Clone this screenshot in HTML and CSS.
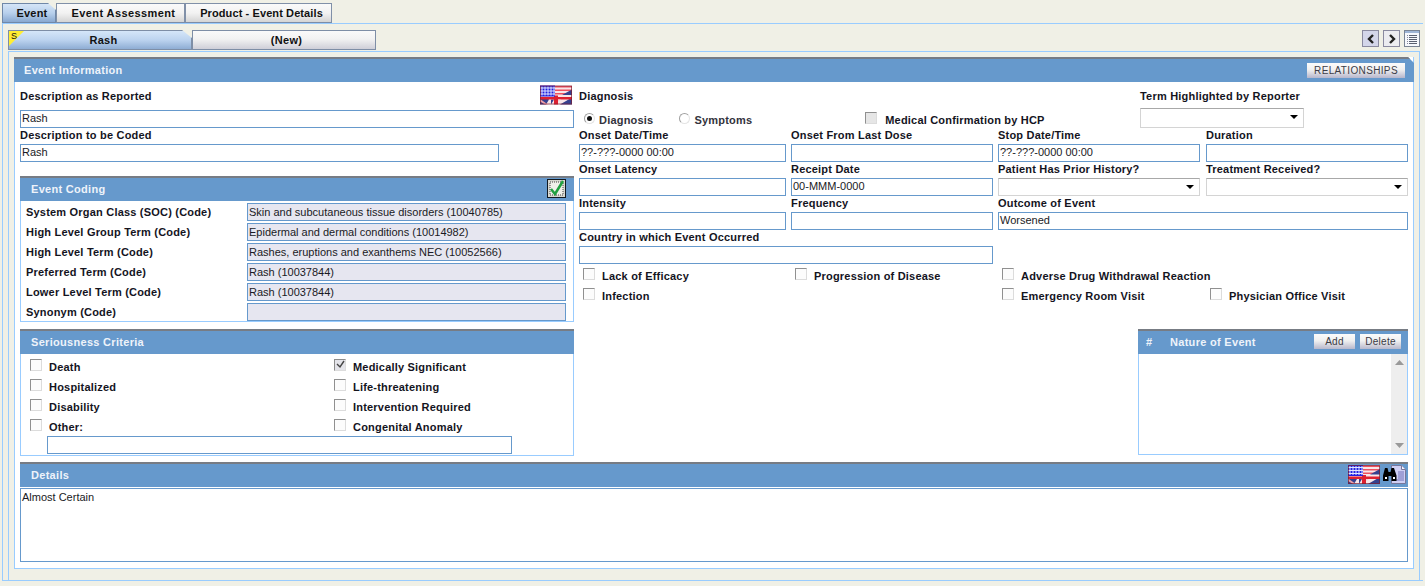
FILE: index.html
```html
<!DOCTYPE html>
<html lang="en">
<head>
<meta charset="utf-8">
<title>Event</title>
<link rel="stylesheet" href="styles.css">
</head>
<body>
<svg class="defs" width="0" height="0" aria-hidden="true">
  <symbol id="flag" viewBox="0 0 32 19">
    <rect width="32" height="19" fill="#f8e6e8"/>
    <path d="M15 .5h17v1.500H15zM15 4h17v1.500H15zM15 7.500h12v1.500H15z" fill="#f05060"/>
    <path d="M0 19V12h6l3 2-3 5zM11 19l3-5h-3zM20 19l12-7v7zM22 9.500 32 4v5.500z" fill="#35408f"/>
    <path d="M0 13.500 8 19H5L0 16z" fill="#f0a0a8"/>
    <path d="M14 10h4v1.500h14v2.500H18v5h-4v-5H0v-2.500h14z" fill="#dd2030"/>
    <path d="M18 14h3l-3 2z" fill="#f6d0d4"/>
    <path d="M0 0h15v11H0z" fill="#2020e0"/>
    <path d="M2 1v9M5 1v9M8 1v9M11 1v9M14 1v9M0 2.500h15M0 5.500h15M0 8.500h15" stroke="#dfe4ff" stroke-width="1"/>
    <rect x=".5" y=".5" width="31" height="18" fill="none" stroke="#7a2030" stroke-opacity=".7"/>
  </symbol>
  <symbol id="check" viewBox="0 0 19 19">
    <rect x=".5" y=".5" width="18" height="18" fill="#d8d8d0" stroke="#101820"/>
    <rect x="3" y="3" width="13" height="13" fill="#f0f0ea" stroke="#444" stroke-dasharray="1 1"/>
    <path d="M4 10l4 5 8-13" fill="none" stroke="#20a040" stroke-width="2.500"/>
  </symbol>
</svg>

<nav class="maintabs">
  <div class="mtab mtab-active mtab-event">Event</div>
  <div class="mtab mtab-assess">Event Assessment</div>
  <div class="mtab mtab-product">Product - Event Details</div>
</nav>

<div class="outer">
  <div class="subbar">
    <div class="stab stab-active">
      <span class="flagS">S</span>
      Rash
    </div>
    <div class="stab">(New)</div>
    <div class="subnav">
      <span class="navbtn"><svg width="12" height="12" viewBox="0 0 12 12"><path d="M8 2 4 6l4 4" fill="none" stroke="#222" stroke-width="2.400"/></svg></span>
      <span class="navbtn navbtn-light"><svg width="12" height="12" viewBox="0 0 12 12"><path d="M4 2l4 4-4 4" fill="none" stroke="#222" stroke-width="2.400"/></svg></span>
      <svg class="listicon" width="16" height="17" viewBox="0 0 16 17"><rect x=".5" y=".5" width="15" height="16" fill="#f6f8fc" stroke="#7a8494"/><rect x="1" y="1" width="14" height="2" fill="#9fb6d6"/><path d="M5 5.500h8M5 7.500h8M5 9.500h8M5 11.500h8M5 13.500h8" stroke="#5a6070"/><path d="M3 5.500h1M3 7.500h1M3 9.500h1M3 11.500h1M3 13.500h1" stroke="#889"/></svg>
    </div>
  </div>

  <div class="wrap">
    <section class="card">
      <header class="cardhead mainhead">
        <span>Event Information</span>
        <button class="relbtn">RELATIONSHIPS</button>
      </header>
      <div class="formarea">
        <div class="leftcol">
          <div class="descrow">
            <label class="lbl">Description as Reported</label>
            <svg class="flagicon" width="32" height="20"><use href="#flag"/></svg>
          </div>
          <div class="field fullfield">Rash</div>
          <label class="lbl">Description to be Coded</label>
          <div class="field codedfield">Rash</div>

          <section class="subpanel coding">
            <header class="subhead">
              <span>Event Coding</span>
              <svg width="19" height="19"><use href="#check"/></svg>
            </header>
            <div class="codegrid">
              <label class="lbl">System Organ Class (SOC) (Code)</label><div class="field ro">Skin and subcutaneous tissue disorders (10040785)</div>
              <label class="lbl">High Level Group Term (Code)</label><div class="field ro">Epidermal and dermal conditions (10014982)</div>
              <label class="lbl">High Level Term (Code)</label><div class="field ro">Rashes, eruptions and exanthems NEC (10052566)</div>
              <label class="lbl">Preferred Term (Code)</label><div class="field ro">Rash (10037844)</div>
              <label class="lbl">Lower Level Term (Code)</label><div class="field ro">Rash (10037844)</div>
              <label class="lbl">Synonym (Code)</label><div class="field ro"></div>
            </div>
          </section>

          <section class="subpanel serious">
            <header class="subhead"><span>Seriousness Criteria</span></header>
            <div class="sergrid">
              <div class="ck"><i class="box"></i><span class="lbl">Death</span></div>
              <div class="ck"><i class="box box-on"><svg width="9" height="9" viewBox="0 0 9 9"><path d="M1 4l3 3 4-6" fill="none" stroke="#444" stroke-width="1.400"/></svg></i><span class="lbl">Medically Significant</span></div>
              <div class="ck"><i class="box"></i><span class="lbl">Hospitalized</span></div>
              <div class="ck"><i class="box"></i><span class="lbl">Life-threatening</span></div>
              <div class="ck"><i class="box"></i><span class="lbl">Disability</span></div>
              <div class="ck"><i class="box"></i><span class="lbl">Intervention Required</span></div>
              <div class="ck"><i class="box"></i><span class="lbl">Other:</span></div>
              <div class="ck"><i class="box"></i><span class="lbl">Congenital Anomaly</span></div>
            </div>
            <div class="field otherfield"></div>
          </section>
        </div>

        <div class="rightcol">
          <div class="toprow">
            <div class="diag">
              <label class="lbl">Diagnosis</label>
              <div class="radios">
                <span class="radio radio-on"></span><span class="lbl lbl-grey">Diagnosis</span>
                <span class="radio radio-sym"></span><span class="lbl lbl-grey">Symptoms</span>
                <i class="box box-grey"></i><span class="lbl">Medical Confirmation by HCP</span>
              </div>
            </div>
            <div class="term">
              <label class="lbl">Term Highlighted by Reporter</label>
              <div class="sel selterm"></div>
            </div>
          </div>

          <div class="fgrid">
            <div class="cell"><label class="lbl">Onset Date/Time</label><div class="field">??-???-0000 00:00</div></div>
            <div class="cell"><label class="lbl">Onset From Last Dose</label><div class="field"></div></div>
            <div class="cell c3"><label class="lbl">Stop Date/Time</label><div class="field">??-???-0000 00:00</div></div>
            <div class="cell"><label class="lbl">Duration</label><div class="field"></div></div>
            <div class="cell"><label class="lbl">Onset Latency</label><div class="field"></div></div>
            <div class="cell"><label class="lbl">Receipt Date</label><div class="field">00-MMM-0000</div></div>
            <div class="cell c3"><label class="lbl">Patient Has Prior History?</label><div class="sel"></div></div>
            <div class="cell"><label class="lbl">Treatment Received?</label><div class="sel"></div></div>
            <div class="cell"><label class="lbl">Intensity</label><div class="field"></div></div>
            <div class="cell"><label class="lbl">Frequency</label><div class="field"></div></div>
            <div class="cell span2"><label class="lbl">Outcome of Event</label><div class="field">Worsened</div></div>
            <div class="cell span2"><label class="lbl">Country in which Event Occurred</label><div class="field"></div></div>
          </div>

          <div class="flags">
            <div class="ck"><i class="box"></i><span class="lbl">Lack of Efficacy</span></div>
            <div class="ck"><i class="box"></i><span class="lbl">Progression of Disease</span></div>
            <div class="ck flagwide"><i class="box"></i><span class="lbl">Adverse Drug Withdrawal Reaction</span></div>
            <div class="ck"><i class="box"></i><span class="lbl">Infection</span></div>
            <div></div>
            <div class="ck"><i class="box"></i><span class="lbl">Emergency Room Visit</span></div>
            <div class="ck"><i class="box"></i><span class="lbl">Physician Office Visit</span></div>
          </div>

          <section class="nature">
            <header class="subhead naturehead">
              <span class="hash">#</span>
              <span class="nature-title">Nature of Event</span>
              <button class="minibtn">Add</button>
              <button class="minibtn">Delete</button>
            </header>
            <div class="naturebody">
              <div class="scroll">
                <svg width="9" height="5" viewBox="0 0 9 5"><path d="M0 5 4.500 0 9 5z" fill="#999"/></svg>
                <svg width="9" height="5" viewBox="0 0 9 5"><path d="M0 0h9L4.500 5z" fill="#999"/></svg>
              </div>
            </div>
          </section>
        </div>
      </div>

      <section class="details">
        <header class="subhead">
          <span>Details</span>
          <div class="detailicons">
            <svg width="32" height="19"><use href="#flag"/></svg>
            <svg class="binoc" width="24" height="19" viewBox="0 0 24 19">
              <path d="M9.500.5h10l4 4v14h-14z" fill="#cfcff4" stroke="#77779a"/>
              <path d="M19.500.5v4h4" fill="#f4f4ff" stroke="#77779a"/>
              <path d="M16 7h6M16 9h6M16 11h6M16 13h6M12 15h10" stroke="#7070b8"/>
              <path d="M3 3h2.500l1 4h2l1-4H12l2.500 7.500V16h-5v-5h-3v5H1v-5.500z" fill="#000"/>
              <path d="M3 12h2v2H3zM11 12h2v2h-2z" fill="#fff"/>
            </svg>
          </div>
        </header>
        <div class="textarea">Almost Certain</div>
      </section>
    </section>
  </div>
</div>
</body>
</html>
```

FILE: styles.css
```css
* { box-sizing: border-box; }
html, body { margin: 0; padding: 0; }
body {
  width: 1425px;
  height: 586px;
  overflow: hidden;
  background: #f0f0e6;
  font-family: "Liberation Sans", Arial, sans-serif;
  font-size: 11px;
  color: #111;
}
.defs { position: absolute; }
.lbl { font-size: 11px; font-weight: bold; color: #14141e; letter-spacing: .2px; line-height: 14px; white-space: nowrap; display: block; }
.lbl-grey { color: #33333c; font-weight: bold; }

/* main tabs */
.maintabs { display: flex; height: 23px; padding: 3px 0 0 2px; }
.mtab {
  height: 20px;
  padding-left: 6px;
  border: 1px solid #8090a8;
  border-bottom-color: #7a8ca8;
  background: linear-gradient(#fafafa, #f2f2f2 50%, #d4d4d4);
  font-size: 11px;
  font-weight: bold;
  letter-spacing: .2px;
  line-height: 18px;
  text-align: center;
}
.mtab-event { width: 54px; }
.mtab-assess { width: 129px; letter-spacing: .4px; }
.mtab-product { width: 147px; letter-spacing: .1px; }
.mtab-active {
  background: linear-gradient(#d5e5f7, #b8d0ec 50%, #88a8d0);
  clip-path: polygon(0 0, 46px 0, 100% 7px, 100% 100%, 0 100%);
  border-color: #7088a8;
}

.outer {
  margin-left: 2px;
  width: 1421px;
  height: 558px;
  border: 1px solid #99ccff;
  border-right: 0;
  padding: 5px 0 0 5px;
}
.subbar { display: flex; height: 22px; align-items: flex-start; padding-top: 1px; }
.stab {
  width: 184px;
  height: 20px;
  padding-left: 5px;
  border: 1px solid #7e8ea6;
  background: linear-gradient(#fafafa, #f2f2f2 45%, #cfcfd8 100%);
  font-size: 11px;
  font-weight: bold;
  letter-spacing: .3px;
  line-height: 18px;
  text-align: center;
}
.stab-active {
  position: relative;
  padding-left: 7px;
  background: linear-gradient(#d5e6f9, #bcd3ef 50%, #8eadd4);
  clip-path: polygon(0 0, 174px 0, 100% 8px, 100% 100%, 0 100%);
}
.flagS {
  position: absolute;
  left: 0;
  top: 0;
  width: 15px;
  height: 15px;
  background: #ffee33;
  clip-path: polygon(0 0, 100% 0, 0 100%);
  font-size: 9px;
  font-weight: normal;
  line-height: 10px;
  text-align: left;
  padding-left: 2px;
  letter-spacing: 0;
}
.subnav { margin-left: auto; margin-right: 3px; display: flex; gap: 4px; align-items: center; height: 17px; width: 58px; }
.navbtn {
  width: 17px;
  height: 17px;
  flex: none;
  border: 1px solid #8a8aa0;
  background: #d4d6ea;
  display: flex;
  align-items: center;
  justify-content: center;
}
.navbtn-light { background: #ececf0; }
.listicon { flex: none; }

/* Main panel */
.wrap {
  width: 1412px;
  height: 530px;
  border: 1px solid #99ccff;
  padding: 5px 0 0 5px;
}
.card {
  width: 1400px;
  height: 512px;
  background: #fff;
  border: 1px solid #99ccff;
  border-top: 0;
}
.cardhead, .subhead {
  display: flex;
  align-items: center;
  justify-content: space-between;
  background: #6699cc;
  border-top: 2px solid #777c84;
  color: #eef3fa;
  font-size: 11px;
  font-weight: bold;
  letter-spacing: .3px;
}
.mainhead {
  height: 25px;
  margin: 0 -1px;
  padding: 0 9px 2px 10px;
  clip-path: polygon(0 0, calc(100% - 6px) 0, 100% 6px, 100% 100%, 0 100%);
}
.relbtn {
  width: 98px;
  height: 15px;
  margin-top: 2px;
  padding: 0;
  border: 0;
  background: linear-gradient(#fbfbfb, #f0f0f0 45%, #b6b6cc);
  font: 10px "Liberation Sans", Arial, sans-serif;
  letter-spacing: .35px;
  color: #3c3c46;
}
.formarea { display: flex; height: 380px; padding-left: 5px; }
.leftcol { width: 554px; padding-top: 7px; flex: none; }
.descrow { display: flex; justify-content: space-between; height: 21px; padding-right: 2px; }
.flagicon { margin-top: -4px; }
.field {
  height: 18px;
  border: 1px solid #6699cc;
  background: #fff;
  padding-left: 1px;
  font-size: 11px;
  line-height: 14px;
  color: #1a1a24;
  white-space: nowrap;
  overflow: hidden;
}
.codedfield { width: 479px; margin-top: 2px; }

.subpanel { border: 1px solid #99ccff; border-top: 0; }
.subhead { height: 25px; margin: 0 -1px; padding: 0 8px 2px 11px; }
.coding { margin-top: 14px; height: 146px; }
.codegrid {
  display: grid;
  grid-template-columns: 221px 319px;
  grid-auto-rows: 20px;
  padding: 1px 0 0 5px;
  align-items: center;
}
.codegrid .field.ro { background: #e6e6f0; line-height: 16px; }
.serious { margin-top: 7px; height: 127px; }
.sergrid {
  display: grid;
  grid-template-columns: 304px 1fr;
  grid-auto-rows: 20px;
  padding: 3px 0 0 9px;
}
.ck { display: flex; align-items: center; gap: 7px; height: 20px; }
.box {
  flex: none;
  width: 12px;
  height: 12px;
  margin-top: -5px;
  border: 1px solid #909090;
  border-right-color: #dcdcdc;
  border-bottom-color: #dcdcdc;
  background: #fcfcfc;
  display: flex;
  align-items: center;
  justify-content: center;
}
.box-on { background: #e4e4ea; border-color: #8c8c8c #dcdcdc #dcdcdc #8c8c8c; }
.otherfield { width: 465px; margin: -1px 0 0 26px; }

.rightcol { flex: 1; padding: 7px 0 0 5px; width: 829px; }
.toprow { display: flex; height: 39px; }
.diag { width: 561px; }
.term { width: 268px; }
.sel.selterm { width: 164px; margin-top: 5px; height: 20px; }
.radios { display: flex; align-items: center; height: 20px; margin-top: 7px; padding-left: 5px; }
.radio {
  width: 11px;
  height: 11px;
  border-radius: 50%;
  border: 1px solid #a0a0a0;
  border-right-color: #e4e4e4;
  border-bottom-color: #e4e4e4;
  background: #fff;
  margin-top: -3px;
  flex: none;
  position: relative;
}
.radio-on::after { content: ""; position: absolute; left: 2px; top: 2px; width: 5px; height: 5px; border-radius: 50%; background: #111; }
.radio + .lbl { margin-left: 4px; }
.radio-sym { margin-left: 26px; }
.box-grey { background: #e6e6e6; margin: -5px 0 0 113px; }
.box-grey + .lbl { margin-left: 8px; }

.fgrid {
  display: grid;
  grid-template-columns: 207px 202px 203px 202px;
  column-gap: 5px;
  width: 829px;
}
.cell { height: 34px; padding-top: 1px; }
.c3 { padding-right: 1px; }
.cell .lbl { height: 15px; line-height: 12px; }
.cell .field, .cell .sel { height: 18px; }
.span2 { grid-column: span 2; }
.sel {
  height: 18px;
  border: 1px solid #d4d4d4;
  border-top-color: #a8a8a8;
  background: #fff;
  position: relative;
}
.sel::after {
  content: "";
  position: absolute;
  right: 5px;
  top: 6px;
  border-left: 4px solid transparent;
  border-right: 4px solid transparent;
  border-top: 4px solid #000;
}
.flags {
  display: grid;
  grid-template-columns: 212px 207px 208px 1fr;
  grid-auto-rows: 20px;
  padding: 2px 0 0 4px;
}
.flagwide { grid-column: span 2; }

.nature { width: 270px; height: 126px; margin: 23px 0 0 559px; border: 1px solid #99ccff; border-top: 0; }
.subhead.naturehead { height: 25px; padding: 0 7px 2px 8px; justify-content: flex-start; }
.hash { width: 24px; }
.nature-title { flex: 1; }
.minibtn {
  width: 41px;
  height: 15px;
  padding: 0;
  margin-left: 5px;
  border: 0;
  background: linear-gradient(#fbfbfb, #f0f0f0 45%, #b8b8cc);
  font: 10px "Liberation Sans", Arial, sans-serif;
  letter-spacing: .3px;
  color: #3a3a44;
}
.naturebody { height: 100px; display: flex; justify-content: flex-end; }
.scroll {
  width: 16px;
  background: #eeeeee;
  display: flex;
  flex-direction: column;
  align-items: center;
  justify-content: space-between;
  padding: 6px 0;
}
.details { margin: 0 5px; }
.details .subhead { margin: 0; height: 25px; padding-right: 2px; }
.detailicons { display: flex; align-items: center; gap: 2px; }
.textarea {
  height: 74px;
  margin-top: 1px;
  border: 1px solid #6699cc;
  padding: 2px 1px;
  font-size: 11px;
  line-height: 12px;
  color: #1a1a24;
}
```
